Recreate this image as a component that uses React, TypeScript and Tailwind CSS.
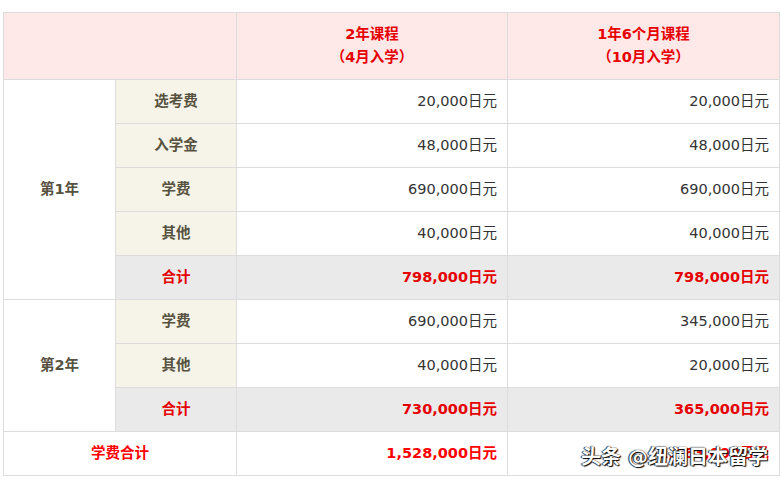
import React from "react"

const font = { fontFamily: '"DejaVu Sans", "Noto Sans CJK SC", sans-serif' }

type Row = { label: string; a: string; b: string; total?: boolean }

const year1: Row[] = [
  { label: "选考费", a: "20,000日元", b: "20,000日元" },
  { label: "入学金", a: "48,000日元", b: "48,000日元" },
  { label: "学费", a: "690,000日元", b: "690,000日元" },
  { label: "其他", a: "40,000日元", b: "40,000日元" },
  { label: "合计", a: "798,000日元", b: "798,000日元", total: true },
]

const year2: Row[] = [
  { label: "学费", a: "690,000日元", b: "345,000日元" },
  { label: "其他", a: "40,000日元", b: "20,000日元" },
  { label: "合计", a: "730,000日元", b: "365,000日元", total: true },
]

function Rows({ year, rows }: { year: string; rows: Row[] }) {
  return (
    <>
      {rows.map((r, i) => (
        <tr key={r.label + i} className="h-[44px]">
          {i === 0 && (
            <td rowSpan={rows.length} className="border border-[#dcdcdc] bg-white text-center font-bold text-[#56523f]">
              {year}
            </td>
          )}
          <td
            className={
              r.total
                ? "border border-[#dcdcdc] bg-[#eaeaea] text-center font-bold text-[#e60000]"
                : "border border-[#dcdcdc] bg-[#f6f4e8] text-center font-bold text-[#56523f]"
            }
          >
            {r.label}
          </td>
          <td
            className={
              r.total
                ? "border border-[#dcdcdc] bg-[#eaeaea] pr-[10px] text-right font-bold text-[#e60000]"
                : "border border-[#dcdcdc] bg-white pr-[10px] text-right text-[#333]"
            }
          >
            {r.a}
          </td>
          <td
            className={
              r.total
                ? "border border-[#dcdcdc] bg-[#eaeaea] pr-[10px] text-right font-bold text-[#e60000]"
                : "border border-[#dcdcdc] bg-white pr-[10px] text-right text-[#333]"
            }
          >
            {r.b}
          </td>
        </tr>
      ))}
    </>
  )
}

export default function App() {
  return (
    <div className="w-[782px] h-[483px] bg-white pt-[12px] pl-[3px]" style={font}>
      <table className="w-[776px] table-fixed border-collapse text-[14.5px]">
        <colgroup>
          <col className="w-[112px]" />
          <col className="w-[121px]" />
          <col className="w-[271px]" />
          <col className="w-[272px]" />
        </colgroup>
        <tbody>
          <tr className="h-[67px] bg-[#ffe8e8]">
            <td colSpan={2} className="border border-[#dcdcdc]" />
            <td className="border border-[#dcdcdc] text-center font-bold leading-[23px] text-[#e60000]">
              2年课程
              <br />
              （4月入学）
            </td>
            <td className="border border-[#dcdcdc] text-center font-bold leading-[23px] text-[#e60000]">
              1年6个月课程
              <br />
              （10月入学）
            </td>
          </tr>
          <Rows year="第1年" rows={year1} />
          <Rows year="第2年" rows={year2} />
          <tr className="h-[44px]">
            <td colSpan={2} className="border border-[#dcdcdc] text-center font-bold text-[#ff0000]">
              学费合计
            </td>
            <td className="border border-[#dcdcdc] pr-[10px] text-right font-bold text-[#ff0000]">1,528,000日元</td>
            <td className="relative border border-[#dcdcdc] pr-[10px] text-right font-bold text-[#ff0000]">
              1,163,000日元
              {/* watermark over the last cell */}
              <span
                className="absolute right-[11px] top-[13px] whitespace-nowrap text-[20px] leading-[24px] text-white"
                style={{ textShadow: "0 0 1px #000, 1px 1px 1px #000, -1px 0 1px #333" }}
              >
                头条 @纽澜日本留学
              </span>
            </td>
          </tr>
        </tbody>
      </table>
    </div>
  )
}
